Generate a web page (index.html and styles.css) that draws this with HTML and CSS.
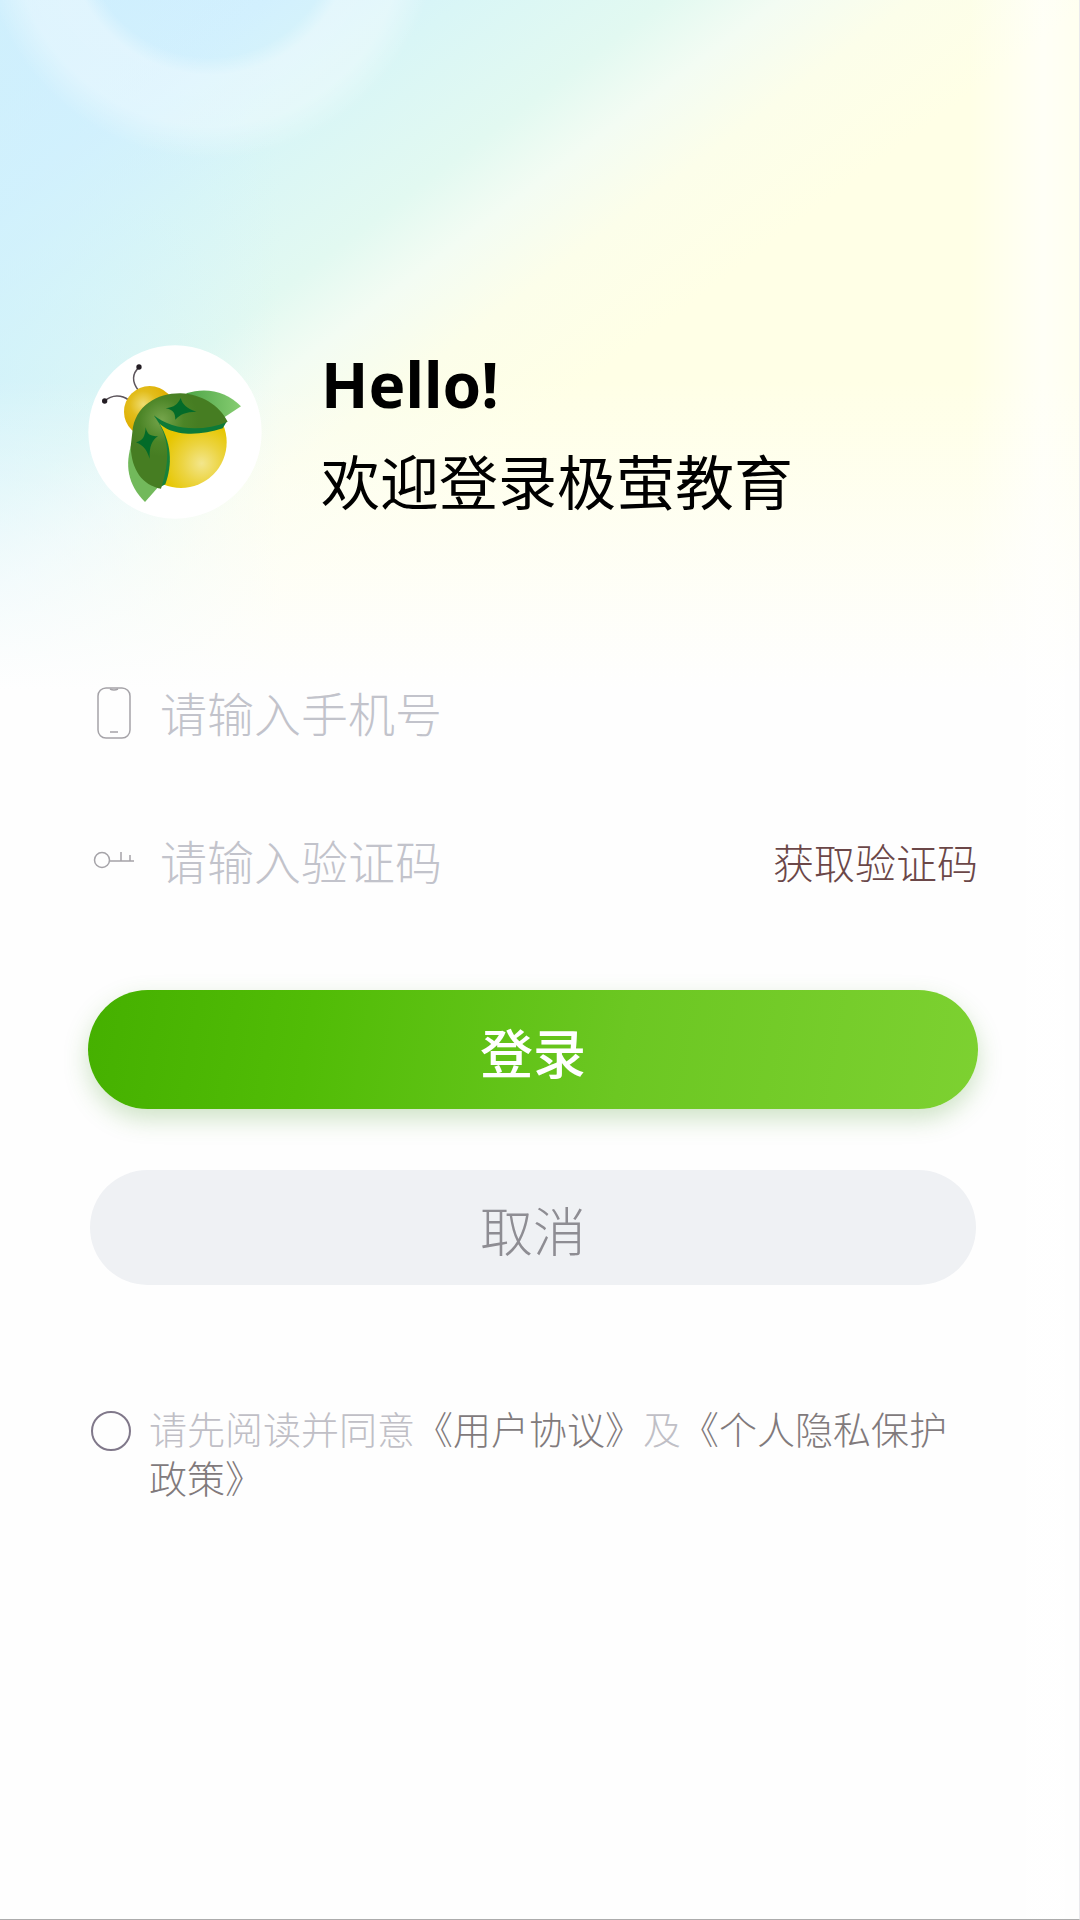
FILE: index.html
```html
<!DOCTYPE html>
<html lang="zh-CN">
<head>
<meta charset="utf-8">
<meta name="viewport" content="width=device-width, initial-scale=1">
<title>登录</title>
<link rel="stylesheet" href="styles.css">
</head>
<body>
<main class="page">
  <header class="welcome">
    <svg class="logo" viewBox="24 30 522 522" role="img" aria-label="极萤教育">
      <defs>
        <radialGradient id="head" gradientUnits="userSpaceOnUse" cx="190" cy="208" r="80"><stop offset="0" stop-color="#efdc70"/><stop offset=".5" stop-color="#e2bd1c"/><stop offset="1" stop-color="#dfae00"/></radialGradient>
        <radialGradient id="body" gradientUnits="userSpaceOnUse" cx="365" cy="385" r="120"><stop offset="0" stop-color="#f3e68c"/><stop offset=".5" stop-color="#ecd440"/><stop offset="1" stop-color="#e6c600"/></radialGradient>
        <radialGradient id="wing" gradientUnits="userSpaceOnUse" cx="245" cy="255" r="110"><stop offset="0" stop-color="#76a54c"/><stop offset=".6" stop-color="#4c8527"/><stop offset="1" stop-color="#467d22"/></radialGradient>
        <linearGradient id="leaf" x1="0" y1="0" x2="1" y2="0"><stop offset="0" stop-color="#4fa548"/><stop offset="1" stop-color="#86cd71"/></linearGradient>
      </defs>
      <circle cx="285" cy="291" r="260" fill="#fff"/>
      <path d="M175 166C155 140 157 115 177 97M146 195C125 179 96 178 74 198" fill="none" stroke="#5d555c" stroke-width="5"/>
      <circle cx="177" cy="96" r="8" fill="#241d24"/><circle cx="74" cy="198" r="8" fill="#241d24"/>
      <circle cx="209" cy="230" r="77" fill="url(#head)"/>
      <circle cx="303" cy="322" r="137" fill="url(#body)"/>
      <path d="M318 175C380 155 440 170 483 214L425 252Z" fill="url(#leaf)"/>
      <path d="M157 320C132 390 144 450 195 501L240 450Z" fill="#72b95b"/>
      <path d="M220 240C250 306 350 306 428 280L440 260Z" fill="#0d7a38"/>
      <path d="M228 250C278 320 277 390 256 448L235 460Z" fill="#16813a"/>
      <path d="M157 292C164 210 235 174 302 175C365 178 417 210 443 260C365 292 275 285 220 240C271 305 271 375 243 461C187 450 155 405 152 335Z" fill="url(#wing)"/>
      <path d="M302 189C308 210 321 221 349 230C317 231 301 237 286 254C286 235 280 224 257 220C284 216 293 208 302 189Z" fill="#036b29"/>
      <path d="M197 277C201 298 211 304 234 304C215 316 208 335 209 371C200 344 191 332 168 322C189 316 195 307 197 277Z" fill="#036b29"/>
    </svg>
    <div class="greeting">
      <h1 class="hello">Hello!</h1>
      <p class="subtitle">欢迎登录极萤教育</p>
    </div>
  </header>

  <form class="form">
    <div class="fields">
      <div class="field">
        <label class="icon-label" for="phone" aria-label="手机号">
          <svg class="icon" viewBox="0 0 52 56" aria-hidden="true">
            <rect x="10" y="3" width="32" height="50" rx="8"/>
            <path d="M22 4Q26 6 30 4M22 47H30"/>
          </svg>
        </label>
        <input class="input" id="phone" type="tel" placeholder="请输入手机号">
      </div>
      <div class="field">
        <label class="icon-label" for="code" aria-label="验证码">
          <svg class="icon" viewBox="0 0 52 56" aria-hidden="true">
            <circle cx="14" cy="27" r="7.5"/>
            <path d="M22 28H46M33 28V19M42 28V22"/>
          </svg>
        </label>
        <input class="input" id="code" type="text" inputmode="numeric" placeholder="请输入验证码">
        <button class="get-code" type="button">获取验证码</button>
      </div>
    </div>
    <div class="actions">
      <button class="button login" type="submit">登录</button>
      <button class="button cancel" type="button">取消</button>
    </div>
    <div class="agreement">
      <input class="agree" id="agree" type="checkbox">
      <label class="terms" for="agree">请先阅读并同意<a class="link" href="#terms">《用户协议》</a>及<a class="link" href="#privacy">《个人隐私保护政策》</a></label>
    </div>
  </form>
</main>
</body>
</html>
```
FILE: styles.css
```css
* {
  box-sizing: border-box;
}

body {
  margin: 0;
  background: #fefefe;
  color: #000;
  font-family: "Noto Sans CJK SC", sans-serif;
  font-weight: 300;
}

.page {
  min-height: 100vh;
  padding: 336px 101px 80px 88px;
  border-right: 1px solid #e9e8ec;
  border-bottom: 1px solid #acacac;
  background:
    linear-gradient(90deg, transparent calc(100% - 110px), rgba(255, 255, 255, .65) calc(100% - 36px), rgba(255, 255, 255, .4)),
    linear-gradient(180deg, rgba(254, 254, 254, 0) 380px, rgba(254, 254, 254, .55) 540px, #fefefe 690px),
    radial-gradient(circle at 210px -69px, transparent 126px, rgba(255, 255, 255, .36) 144px, rgba(255, 255, 255, .34) 195px, transparent 228px),
    linear-gradient(90deg, rgba(208, 241, 252, .65), rgba(208, 242, 250, 0) 280px),
    linear-gradient(143deg, #cdecff 0, #d2f0fe 160px, #d9f6f6 280px, #e2f9f1 400px, #f3fcf3 470px, #fcfeea 550px, #ffffe6 660px);
  background-color: #fefefe;
}

.welcome {
  display: flex;
  align-items: center;
  gap: 59px;
}

.logo {
  width: 174px;
  height: 174px;
  flex: none;
}

.greeting {
  display: flex;
  flex-direction: column;
}

.hello,
.subtitle {
  margin: 0;
  font-size: 59px;
  line-height: 96px;
  font-weight: 400;
}

.hello {
  font-family: "Noto Sans", "Open Sans", sans-serif;
  font-size: 62px;
  font-weight: 700;
}

.form {
  display: flex;
  flex-direction: column;
  gap: 118px;
  margin-top: 135px;
}

.fields {
  display: flex;
  flex-direction: column;
  gap: 48px;
}

.field {
  display: flex;
  align-items: center;
  height: 100px;
}

.icon-label {
  display: flex;
  width: 72px;
  flex: none;
}

.icon {
  width: 52px;
  height: 56px;
  fill: none;
  stroke: #a5a3a8;
  stroke-width: 1.5;
}

.input {
  flex: 1;
  min-width: 0;
  height: 100%;
  padding: 0 0 4px;
  border: 0;
  outline: 0;
  background: none;
  color: #333;
  font: inherit;
  font-size: 47px;
}

.input::placeholder {
  color: #c2c3cb;
  opacity: 1;
}

.get-code {
  padding: 0;
  border: 0;
  background: none;
  color: #6b4748;
  font: inherit;
  font-size: 41px;
}

.actions {
  display: flex;
  flex-direction: column;
  gap: 61px;
  margin-top: -39px;
}

.button {
  height: 119px;
  padding: 2px 0 0;
  border: 0;
  border-radius: 60px;
  font: inherit;
  font-size: 53px;
}

.login {
  background: linear-gradient(100deg, #45b000, #51bc06 25%, #6cc722 60%, #7dd131);
  box-shadow: 0 10px 24px rgba(70, 150, 40, .26);
  color: #fff;
  font-weight: 500;
}

.cancel {
  height: 115px;
  margin: 0 2px;
  background: #eff1f4;
  color: #8e8d93;
}

.agreement {
  display: flex;
  align-items: flex-start;
  gap: 18px;
}

.agree {
  appearance: none;
  width: 40px;
  height: 40px;
  flex: none;
  margin: 8px 0 0 3px;
  border: 2px solid #80788a;
  border-radius: 50%;
}

.agree:checked {
  background: #51bc06;
}

.terms {
  color: #c0bfc6;
  font-size: 38px;
  line-height: 49px;
}

.link {
  color: #817a7c;
  text-decoration: none;
}
```
